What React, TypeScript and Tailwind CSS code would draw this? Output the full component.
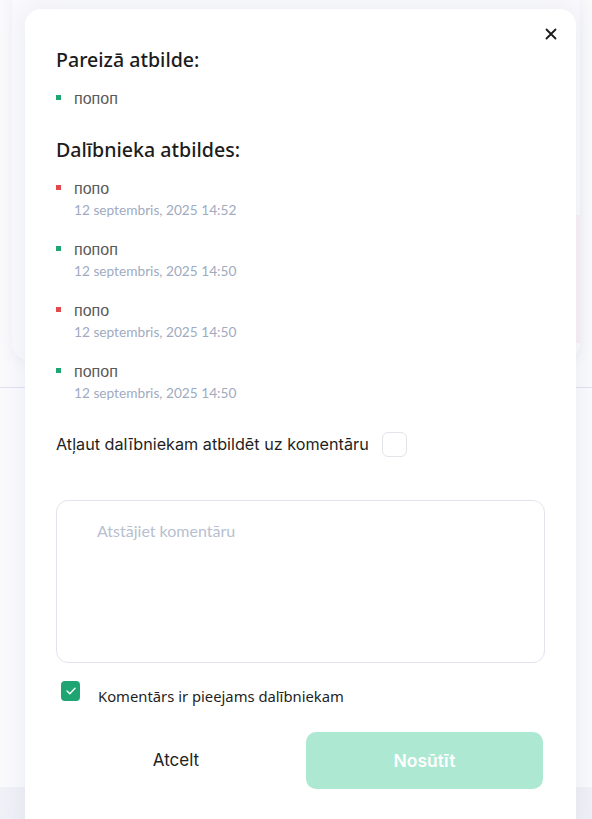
import React from "react";

const items = [
  { ok: false, text: "попо", date: "12 septembris, 2025 14:52" },
  { ok: true, text: "попоп", date: "12 septembris, 2025 14:50" },
  { ok: false, text: "попо", date: "12 septembris, 2025 14:50" },
  { ok: true, text: "попоп", date: "12 septembris, 2025 14:50" },
];

export default function App() {
  return (
    <div className="relative w-[592px] h-[819px] overflow-hidden bg-white">
      {/* background page */}
      <div className="flex flex-col h-full">
        <div className="mx-3 h-[376px] -mt-4 rounded-2xl bg-white shadow-[0_2px_12px_rgba(90,100,150,0.10)] flex flex-col">
          <div className="h-[231px]" />
          <div className="flex justify-end">
            <div className="w-[40px] h-[128px] bg-[#fff3f2]" />
          </div>
        </div>
        <div className="h-[27px]" />
        <div className="h-px bg-[#dcdcee]" />
        <div className="h-[399px]" />
        <div className="flex-1 bg-[#f1f3f7]" />
      </div>

      {/* overlay */}
      <div className="absolute inset-0 bg-[#eef0f8]/30" />

      {/* modal */}
      <div className="absolute left-[25px] top-[9px] w-[551px] h-[830px] rounded-2xl bg-white shadow-[0_0_24px_rgba(80,90,140,0.10)] px-[31px] pt-[38px] font-['Noto_Sans',sans-serif]">
        <button className="absolute right-[18px] top-[18px] w-[14px] h-[14px] flex items-center justify-center">
          <svg width="12" height="12" viewBox="0 0 12 12" fill="none">
            <path d="M1.5 1.5 L10.5 10.5 M10.5 1.5 L1.5 10.5" stroke="#1a1a1a" strokeWidth="1.8" strokeLinecap="round" />
          </svg>
        </button>

        <h2 className="text-[19.6px] leading-[26px] font-medium text-[#1c1c1c]">Pareizā atbilde:</h2>
        <div className="mt-[15px] flex items-center gap-[13px] h-[22px]">
          <span className="w-[5px] h-[5px] bg-[#1fa572] -mt-[4px]" />
          <span className="font-['Liberation_Sans',sans-serif] text-[16px] text-[#5a5a5a]">попоп</span>
        </div>

        <h2 className="mt-[27px] text-[19.6px] leading-[26px] font-medium text-[#1c1c1c]">Dalībnieka atbildes:</h2>
        <div className="mt-[15px] flex flex-col gap-[19px]">
          {items.map((it, i) => (
            <div key={i} className="flex gap-[13px]">
              <span className={`w-[5px] h-[5px] mt-[7px] ${it.ok ? "bg-[#1fa572]" : "bg-[#e5484d]"}`} />
              <div className="flex flex-col">
                <span className="font-['Liberation_Sans',sans-serif] text-[16px] leading-[21px] text-[#5a5a5a]">{it.text}</span>
                <span className="font-['Lato',sans-serif] text-[13.7px] leading-[21px] text-[#a0abbf]">{it.date}</span>
              </div>
            </div>
          ))}
        </div>

        <div className="mt-[29px] flex items-center gap-[13px]">
          <span className="font-['Inter',sans-serif] text-[16.2px] text-[#1f1f1f]">Atļaut dalībniekam atbildēt uz komentāru</span>
          <span className="w-[25px] h-[25px] rounded-[6px] border border-[#e3e4ea] bg-white" />
        </div>

        <div className="mt-[43px] h-[163px] rounded-xl border border-[#e3e3ee] px-[40px] pt-[18px]">
          <span className="font-['Lato',sans-serif] text-[16px] text-[#b7c0d0]">Atstājiet komentāru</span>
        </div>

        <div className="mt-[22px] flex items-center pl-[5px] gap-[18px]">
          <span className="w-[19px] h-[20px] rounded-[4px] bg-[#1fa572] flex items-center justify-center -mt-[10px]">
            <svg width="10" height="8" viewBox="0 0 10 8" fill="none">
              <path d="M1 4 L3.8 6.7 L9 1.3" stroke="white" strokeWidth="1.4" strokeLinecap="round" strokeLinejoin="round" />
            </svg>
          </span>
          <span className="text-[14.8px] text-[#1f1f1f]">Komentārs ir pieejams dalībniekam</span>
        </div>

        <div className="mt-[25px] flex gap-[10px] pr-[2px]">
          <button className="flex-1 h-[57px] font-['Inter',sans-serif] text-[17px] text-[#222]">Atcelt</button>
          <button className="w-[237px] h-[57px] rounded-[10px] bg-[#ade8d2] font-['Inter',sans-serif] font-semibold text-[17.5px] text-white">Nosūtīt</button>
        </div>
      </div>
    </div>
  );
}
